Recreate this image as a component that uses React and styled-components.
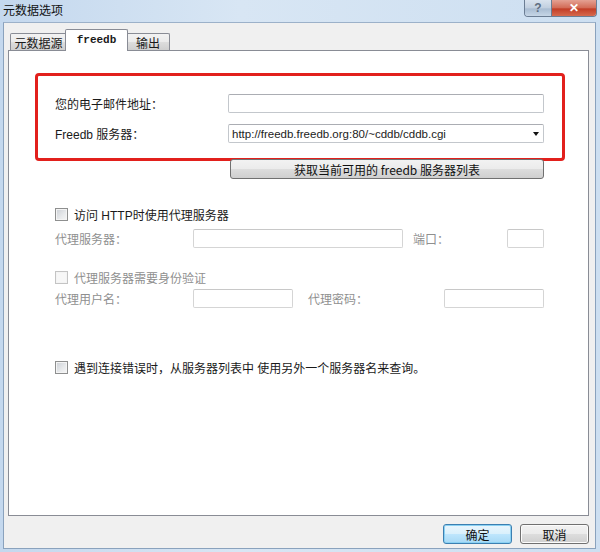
import styled, { createGlobalStyle, css } from "styled-components";

const Global = createGlobalStyle`
  html, body { margin: 0; padding: 0; background: #cfe0f2; }
  body {
    font-family: "Liberation Sans", "Noto Sans CJK SC", sans-serif;
    font-size: 12px;
    color: #1a1a1a;
  }
`;

const Window = styled.div`
  width: 600px;
  height: 552px;
  box-sizing: border-box;
  display: flex;
  flex-direction: column;
  background: linear-gradient(90deg, #c4d8ee 0%, #d8e6f4 40%, #cddff1 100%);
  overflow: hidden;
`;

const TitleBar = styled.div`
  height: 22px;
  display: flex;
  align-items: flex-start;
  padding: 0 3px 0 3px;
`;

const Title = styled.div`
  font-family: "Noto Sans CJK SC", sans-serif;
  font-size: 12px;
  line-height: 20px;
  color: #111;
`;

const Caption = styled.div`
  margin-left: auto;
  display: flex;
  border: 1px solid #6b7d93;
  border-top: none;
  border-radius: 0 0 4px 4px;
  overflow: hidden;
  height: 16px;
`;

const CapBtn = styled.div`
  display: flex;
  align-items: center;
  justify-content: center;
  height: 16px;
  width: ${(p) => p.$w}px;
  color: #fff;
  font-weight: bold;
  font-size: 12px;
  ${(p) =>
    p.$close
      ? css`
          background: linear-gradient(#e4a193 0%, #d26a55 50%, #c23d26 55%, #d66a4e 100%);
        `
      : css`
          background: linear-gradient(#d9e3ee 0%, #c1cfdf 50%, #a9bcd2 55%, #c6d6e6 100%);
          border-right: 1px solid #6b7d93;
          color: #5e6d80;
        `}
`;

const Body = styled.div`
  flex: 1;
  margin: 0 4px 3px 3px;
  background: #f0f0f0;
  border: 1px solid #8aa2bd;
  border-top-color: #9cb1c9;
  display: flex;
  flex-direction: column;
  padding: 5px 6px 0 4px;
`;

const Tabs = styled.div`
  display: flex;
  align-items: flex-end;
  padding-left: 2px;
  height: 22px;
  position: relative;
  z-index: 1;
`;

const Tab = styled.div`
  box-sizing: border-box;
  border: 1px solid #898c95;
  border-bottom: none;
  border-radius: 2px 2px 0 0;
  display: flex;
  align-items: center;
  justify-content: center;
  font-family: "Noto Sans CJK SC", sans-serif;
  font-size: 12px;
  ${(p) =>
    p.$active
      ? css`
          height: 22px;
          margin: 0 -2px -1px;
          background: #fff;
          width: 63px;
          font-family: "Liberation Mono", monospace;
          font-weight: bold;
          font-size: 11px;
          position: relative;
          z-index: 2;
          padding-bottom: 1px;
        `
      : css`
          height: 17px;
          background: linear-gradient(#f2f2f2 0%, #ebebeb 50%, #dddddd 51%, #cfcfcf 100%);
          width: ${p.$w}px;
        `}
`;

const Panel = styled.div`
  height: 466px;
  box-sizing: border-box;
  background: #fff;
  border: 1px solid #898c95;
  padding: 22px 0 0 26px;
  display: flex;
  flex-direction: column;
`;

const RedBox = styled.div`
  width: 530px;
  height: 88px;
  box-sizing: border-box;
  border: 3px solid #e2201c;
  border-radius: 4px;
  padding: 18px 18px 0 17px;
  display: flex;
  flex-direction: column;
  gap: 11px;
`;

const Row = styled.div`
  display: flex;
  align-items: center;
  height: 19px;
  margin: ${(p) => p.$mt || 0}px 0 0 ${(p) => p.$indent || 0}px;
`;

const Label = styled.div`
  width: ${(p) => p.$w}px;
  flex-shrink: 0;
  font-family: "Liberation Sans", "Noto Sans CJK SC", sans-serif;
  font-size: 12px;
  color: ${(p) => (p.$dim ? "#8f8f8f" : "#1a1a1a")};
  margin-left: ${(p) => p.$ml || 0}px;
`;

const Input = styled.div`
  box-sizing: border-box;
  height: 19px;
  width: ${(p) => p.$w}px;
  border: 1px solid ${(p) => (p.$dim ? "#d5d5d5" : "#c3c7cc")};
  border-top-color: ${(p) => (p.$dim ? "#c8c8c8" : "#abadb3")};
  border-radius: 2px;
  background: #fff;
`;

const Select = styled(Input)`
  display: flex;
  align-items: center;
  padding: 0 4px 0 3px;
  font-size: 11.5px;
  color: #222;
  span { flex: 1; }
`;

const Arrow = styled.i`
  width: 0;
  height: 0;
  border-left: 3.5px solid transparent;
  border-right: 3.5px solid transparent;
  border-top: 4px solid #111;
`;

const WideButton = styled.div`
  box-sizing: border-box;
  width: 314px;
  height: 20px;
  margin: -2px 0 0 195px;
  border: 1px solid #707070;
  border-radius: 3px;
  background: linear-gradient(#f2f2f2 0%, #ebebeb 50%, #dddddd 51%, #cfcfcf 100%);
  display: flex;
  align-items: center;
  justify-content: center;
  font-family: "Noto Sans CJK SC", sans-serif;
  font-size: 12px;
  color: #111;
  position: relative;
`;

const CheckRow = styled.div`
  display: flex;
  align-items: center;
  gap: 6px;
  margin: ${(p) => p.$mt}px 0 0 20px;
  height: 19px;
  font-family: "Liberation Sans", "Noto Sans CJK SC", sans-serif;
  font-size: 12px;
  color: ${(p) => (p.$dim ? "#8f8f8f" : "#1a1a1a")};
`;

const Box = styled.span`
  box-sizing: border-box;
  width: 13px;
  height: 13px;
  border: 1px solid ${(p) => (p.$dim ? "#c4c4c4" : "#8e8f8f")};
  background: ${(p) =>
    p.$dim
      ? "#f7f7f7"
      : "linear-gradient(135deg, #cbcfd5 0%, #e8eaec 60%, #f6f6f6 100%)"};
  box-shadow: inset 0 0 0 1px #f4f4f4;
`;

const Footer = styled.div`
  display: flex;
  justify-content: flex-end;
  gap: 8px;
  padding-top: 8px;
`;

const DlgButton = styled.div`
  box-sizing: border-box;
  width: 69px;
  height: 20px;
  border-radius: 3px;
  display: flex;
  align-items: center;
  justify-content: center;
  font-family: "Noto Sans CJK SC", sans-serif;
  font-size: 12px;
  color: #111;
  border: 1px solid ${(p) => (p.$default ? "#3c7fb1" : "#707070")};
  background: ${(p) =>
    p.$default
      ? "linear-gradient(#eaf6fd 0%, #d9f0fc 50%, #bee6fd 51%, #a7d9f5 100%)"
      : "linear-gradient(#f2f2f2 0%, #ebebeb 50%, #dddddd 51%, #cfcfcf 100%)"};
  box-shadow: ${(p) => (p.$default ? "inset 0 0 0 1px #8ad1f3" : "inset 0 0 0 1px #fcfcfc")};
`;

export default function App() {
  return (
    <>
      <Global />
      <Window>
        <TitleBar>
          <Title>元数据选项</Title>
          <Caption>
            <CapBtn $w={26}>?</CapBtn>
            <CapBtn $w={44} $close>✕</CapBtn>
          </Caption>
        </TitleBar>
        <Body>
          <Tabs>
            <Tab $w={57}>元数据源</Tab>
            <Tab $active>freedb</Tab>
            <Tab $w={44}>输出</Tab>
          </Tabs>
          <Panel>
            <RedBox>
              <Row>
                <Label $w={173}>您的电子邮件地址：</Label>
                <Input $w={316} />
              </Row>
              <Row>
                <Label $w={173}>Freedb 服务器：</Label>
                <Select $w={316}>
                  <span>http://freedb.freedb.org:80/~cddb/cddb.cgi</span>
                  <Arrow />
                </Select>
              </Row>
            </RedBox>
            <WideButton>获取当前可用的 freedb 服务器列表</WideButton>

            <CheckRow $mt={26}>
              <Box />
              访问 HTTP时使用代理服务器
            </CheckRow>
            <Row $indent={20} $mt={5}>
              <Label $w={138} $dim>代理服务器：</Label>
              <Input $w={210} $dim />
              <Label $w={94} $ml={10} $dim>端口：</Label>
              <Input $w={37} $dim />
            </Row>

            <CheckRow $mt={20} $dim>
              <Box $dim />
              代理服务器需要身份验证
            </CheckRow>
            <Row $indent={20} $mt={2}>
              <Label $w={138} $dim>代理用户名：</Label>
              <Input $w={100} $dim />
              <Label $w={136} $ml={15} $dim>代理密码：</Label>
              <Input $w={100} $dim />
            </Row>

            <CheckRow $mt={50}>
              <Box />
              遇到连接错误时，从服务器列表中 使用另外一个服务器名来查询。
            </CheckRow>
          </Panel>
          <Footer>
            <DlgButton $default>确定</DlgButton>
            <DlgButton>取消</DlgButton>
          </Footer>
        </Body>
      </Window>
    </>
  );
}
